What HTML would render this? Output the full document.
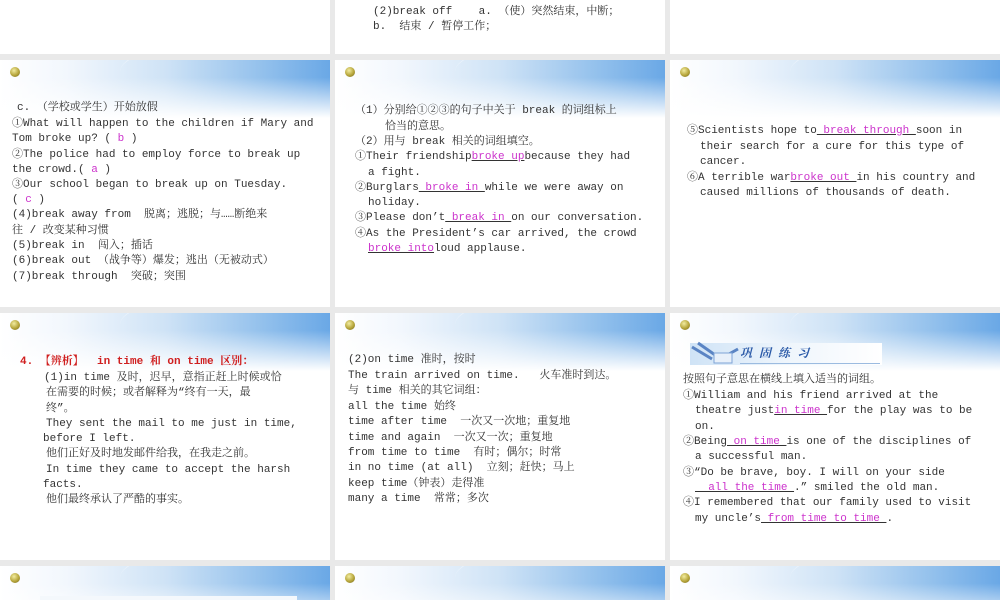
<!DOCTYPE html>
<html style="width:1000px;height:600px;overflow:hidden"><head><meta charset="utf-8"><style>
body{margin:0;width:1000px;height:600px;background:#e9e9e9;overflow:hidden;position:relative;font-family:"Liberation Mono","Noto Serif CJK SC",monospace;font-size:11px;color:#333}
.s{position:absolute;width:330px;height:247px;background:#fff;overflow:hidden}
.h{position:absolute;left:0;top:0;width:100%;height:58px;background:linear-gradient(to bottom,rgba(255,255,255,0) 0%,rgba(255,255,255,0) 30%,#fff 100%),linear-gradient(to right,#fff 0%,#f2f7fd 20%,#cfe3f6 50%,#92c0ec 80%,#6aa8e6 100%)}
.h:after{content:"";position:absolute;left:120px;top:-30px;width:400px;height:80px;border-radius:50%;border-top:3px solid rgba(255,255,255,.45)}
.d{position:absolute;left:10px;top:7px;width:10px;height:10px;border-radius:50%;background:radial-gradient(circle at 40% 35%,#f2eca0,#b6a53a 55%,#6d6420)}
.l{position:absolute;white-space:pre;line-height:16px;height:16px}
.m{color:#cc33cc;text-decoration:underline;text-decoration-color:#333}
.r{color:#d02020;font-weight:bold}
</style></head><body>

<div class="s" style="left:0;top:-193px"></div>
<div class="s" style="left:335px;top:-193px">
<div class="l" style="left:38px;top:197px">(2)break off    a. （使）突然结束，中断；</div>
<div class="l" style="left:38px;top:212px">b.  结束 / 暂停工作；</div>
</div>
<div class="s" style="left:670px;top:-193px"></div>

<div class="s" style="left:0;top:60px"><div class="h"></div><div class="d"></div>
<div class="l" style="left:17px;top:40px">c. （学校或学生）开始放假</div>
<div class="l" style="left:12px;top:56px">①What will happen to the children if Mary and</div>
<div class="l" style="left:12px;top:71px">Tom broke up? ( <span style="color:#c3c">b</span> )</div>
<div class="l" style="left:12px;top:87px">②The police had to employ force to break up</div>
<div class="l" style="left:12px;top:102px">the crowd.( <span style="color:#c3c">a</span> )</div>
<div class="l" style="left:12px;top:117px">③Our school began to break up on Tuesday.</div>
<div class="l" style="left:12px;top:132px">( <span style="color:#c3c">c</span> )</div>
<div class="l" style="left:12px;top:147px">(4)break away from  脱离；逃脱；与……断绝来</div>
<div class="l" style="left:12px;top:163px">往 / 改变某种习惯</div>
<div class="l" style="left:12px;top:178px">(5)break in  闯入；插话</div>
<div class="l" style="left:12px;top:193px">(6)break out （战争等）爆发；逃出（无被动式）</div>
<div class="l" style="left:12px;top:209px">(7)break through  突破；突围</div>
</div>

<div class="s" style="left:335px;top:60px"><div class="h"></div><div class="d"></div>
<div class="l" style="left:20px;top:43px">（1）分别给①②③的句子中关于 break 的词组标上</div>
<div class="l" style="left:50px;top:59px">恰当的意思。</div>
<div class="l" style="left:20px;top:74px">（2）用与 break 相关的词组填空。</div>
<div class="l" style="left:20px;top:89px">①Their friendship<span class="m">broke up</span>because they had</div>
<div class="l" style="left:33px;top:105px">a fight.</div>
<div class="l" style="left:20px;top:120px">②Burglars<span class="m"> broke in </span>while we were away on</div>
<div class="l" style="left:33px;top:135px">holiday.</div>
<div class="l" style="left:20px;top:150px">③Please don’t<span class="m"> break in </span>on our conversation.</div>
<div class="l" style="left:20px;top:166px">④As the President’s car arrived, the crowd</div>
<div class="l" style="left:33px;top:181px"><span class="m">broke into</span>loud applause.</div>
</div>

<div class="s" style="left:670px;top:60px"><div class="h"></div><div class="d"></div>
<div class="l" style="left:17px;top:63px">⑤Scientists hope to<span class="m"> break through </span>soon in</div>
<div class="l" style="left:30px;top:79px">their search for a cure for this type of</div>
<div class="l" style="left:30px;top:94px">cancer.</div>
<div class="l" style="left:17px;top:110px">⑥A terrible war<span class="m">broke out </span>in his country and</div>
<div class="l" style="left:30px;top:125px">caused millions of thousands of death.</div>
</div>

<div class="s" style="left:0;top:313px"><div class="h"></div><div class="d"></div>
<div class="l r" style="left:20px;top:41px">4. 【辨析】  in time 和 on time 区别：</div>
<div class="l" style="left:44px;top:57px">(1)in time 及时，迟早，意指正赶上时候或恰</div>
<div class="l" style="left:46px;top:72px">在需要的时候；或者解释为“终有一天，最</div>
<div class="l" style="left:46px;top:88px">终”。</div>
<div class="l" style="left:46px;top:103px">They sent the mail to me just in time,</div>
<div class="l" style="left:43px;top:118px">before I left.</div>
<div class="l" style="left:46px;top:133px">他们正好及时地发邮件给我，在我走之前。</div>
<div class="l" style="left:46px;top:149px">In time they came to accept the harsh</div>
<div class="l" style="left:43px;top:164px">facts.</div>
<div class="l" style="left:46px;top:179px">他们最终承认了严酷的事实。</div>
</div>

<div class="s" style="left:335px;top:313px"><div class="h"></div><div class="d"></div>
<div class="l" style="left:13px;top:39px">(2)on time 准时，按时</div>
<div class="l" style="left:13px;top:55px">The train arrived on time.   火车准时到达。</div>
<div class="l" style="left:13px;top:70px">与 time 相关的其它词组：</div>
<div class="l" style="left:13px;top:86px">all the time 始终</div>
<div class="l" style="left:13px;top:101px">time after time  一次又一次地；重复地</div>
<div class="l" style="left:13px;top:117px">time and again  一次又一次；重复地</div>
<div class="l" style="left:13px;top:132px">from time to time  有时；偶尔；时常</div>
<div class="l" style="left:13px;top:147px">in no time (at all)  立刻；赶快；马上</div>
<div class="l" style="left:13px;top:163px">keep time（钟表）走得准</div>
<div class="l" style="left:13px;top:178px">many a time  常常；多次</div>
</div>

<div class="s" style="left:670px;top:313px"><div class="h"></div><div class="d"></div>
<div style="position:absolute;left:20px;top:30px;width:192px;height:22px;background:linear-gradient(to right,#cfe3f6,#eef5fc 50%,#fff)"></div>
<svg style="position:absolute;left:20px;top:26px" width="60" height="30"><path d="M2 8 L22 20 M8 4 L28 18 M30 20 L48 10" stroke="#5a84c4" stroke-width="3" fill="none"/><rect x="24" y="14" width="18" height="10" fill="#e8f0fa" stroke="#7ea3d6"/></svg>
<div class="l" style="left:70px;top:33px;color:#2b5aa8;font-weight:bold;font-size:12px;letter-spacing:7px;font-style:italic">巩固练习</div>
<div style="position:absolute;left:70px;top:50px;width:140px;height:1px;background:#9bbbe0"></div>
<div class="l" style="left:13px;top:59px">按照句子意思在横线上填入适当的词组。</div>
<div class="l" style="left:13px;top:75px">①William and his friend arrived at the</div>
<div class="l" style="left:25px;top:90px">theatre just<span class="m">in time </span>for the play was to be</div>
<div class="l" style="left:25px;top:106px">on.</div>
<div class="l" style="left:13px;top:121px">②Being<span class="m"> on time </span>is one of the disciplines of</div>
<div class="l" style="left:25px;top:136px">a successful man.</div>
<div class="l" style="left:13px;top:152px">③“Do be brave, boy. I will on your side</div>
<div class="l" style="left:25px;top:167px"><span class="m">  all the time </span>.” smiled the old man.</div>
<div class="l" style="left:13px;top:182px">④I remembered that our family used to visit</div>
<div class="l" style="left:25px;top:198px">my uncle’s<span class="m"> from time to time </span>.</div>
</div>

<div class="s" style="left:0;top:566px;height:34px"><div class="h"></div><div class="d"></div>
<div style="position:absolute;left:40px;top:30px;width:257px;height:10px;background:#f4f8fc"></div></div>
<div class="s" style="left:335px;top:566px;height:34px"><div class="h"></div><div class="d"></div></div>
<div class="s" style="left:670px;top:566px;height:34px"><div class="h"></div><div class="d"></div></div>
</body></html>
